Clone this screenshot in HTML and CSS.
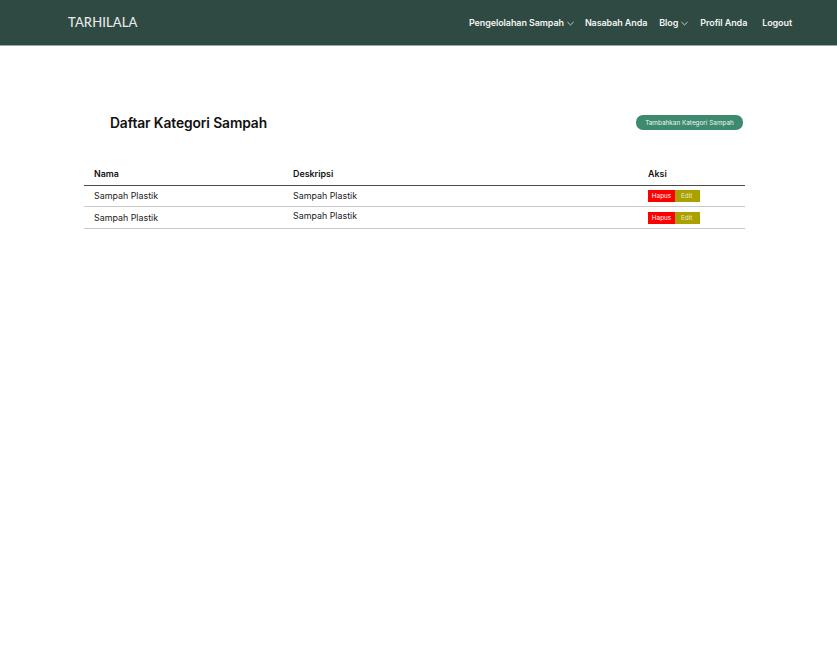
FILE: index.html
```html
<!DOCTYPE html>
<html lang="id">
<head>
<meta charset="utf-8">
<title>Daftar Kategori Sampah</title>
<link rel="stylesheet" href="styles.css">
</head>
<body>
<nav class="navbar">
  <div class="brand">TARHILALA</div>
  <ul class="menu">
    <li>Pengelolahan Sampah <svg class="chev" viewBox="0 0 8 5" width="7" height="5"><path d="M0.5 0.8 L4 4.2 L7.5 0.8" fill="none" stroke="currentColor" stroke-width="0.9"/></svg></li>
    <li>Nasabah Anda</li>
    <li>Blog <svg class="chev" viewBox="0 0 8 5" width="7" height="5"><path d="M0.5 0.8 L4 4.2 L7.5 0.8" fill="none" stroke="currentColor" stroke-width="0.9"/></svg></li>
    <li>Profil Anda</li>
    <li class="logout">Logout</li>
  </ul>
</nav>
<main class="content">
  <div class="page-head">
    <h1 class="title">Daftar Kategori Sampah</h1>
    <button class="btn-add">Tambahkan Kategori Sampah</button>
  </div>
  <table class="table">
    <thead>
      <tr><th class="c1">Nama</th><th class="c2">Deskripsi</th><th class="c3">Aksi</th></tr>
    </thead>
    <tbody>
      <tr><td>Sampah Plastik</td><td>Sampah Plastik</td><td><span class="btn-del">Hapus</span><span class="btn-edit">Edit</span></td></tr>
      <tr><td>Sampah Plastik</td><td class="up">Sampah Plastik</td><td><span class="btn-del">Hapus</span><span class="btn-edit">Edit</span></td></tr>
    </tbody>
  </table>
</main>
</body>
</html>
```
FILE: styles.css
```css
* { box-sizing: border-box; }
body {
  margin: 0;
  font-family: Inter, "Noto Sans", sans-serif;
  background: #fff;
  color: #111;
}
.navbar {
  height: 46px;
  background: #2f4a43;
  border-bottom: 1px solid #9aa8a3;
  display: flex;
  align-items: center;
  justify-content: space-between;
  padding: 0 45px 0 68px;
}
.brand {
  color: #e6e9e7;
  font-family: Lato, Inter, sans-serif;
  font-size: 13px;
  font-weight: 500;
  letter-spacing: 0.1px;
  padding-bottom: 1px;
}
.menu {
  list-style: none;
  margin: 0;
  padding: 0 0 1px 0;
  display: flex;
  align-items: center;
  gap: 12px;
  color: #f2f4f3;
  font-size: 9px;
  font-weight: 600;
  letter-spacing: -0.1px;
}
.menu li { display: flex; align-items: center; gap: 3px; }
.menu li:first-child { margin-right: -1px; }
.menu .logout { margin-left: 3px; }
.chev { margin-top: 2px; }
.content {
  padding: 0 92px 0 84px;
}
.page-head {
  display: flex;
  justify-content: space-between;
  align-items: center;
  padding: 68px 2px 0 26px;
  height: 86px;
}
.title {
  margin: 0;
  font-size: 13.8px;
  font-weight: 600;
  letter-spacing: -0.1px;
}
.btn-add {
  border: none;
  background: #3d8a6f;
  color: #eef5f2;
  font-family: Inter, sans-serif;
  font-size: 6.4px;
  height: 15px;
  width: 107px;
  padding: 0;
  border-radius: 7px;
  margin-top: -1px;
}
.table {
  width: 661px;
  border-collapse: collapse;
  margin-top: 32px;
  font-size: 8.9px;
}
.table th {
  text-align: left;
  font-weight: 600;
  height: 21px;
  padding: 0 0 2px 10px;
  border-bottom: 1px solid #4a4a4a;
  vertical-align: middle;
}
.table td {
  height: 21px;
  padding: 0 0 0 10px;
  border-bottom: 1px solid #c8c8c8;
  vertical-align: middle;
  color: #222;
}
.table tbody tr:last-child td { height: 22px; }
.table .c1 { width: 199px; }
.table .c2 { width: 355px; }
.table td.up { padding-bottom: 3px; }
.btn-del, .btn-edit {
  display: inline-block;
  height: 12px;
  line-height: 12px;
  font-size: 6.4px;
  color: #fff;
  vertical-align: middle;
  margin-top: 1px;
}
.btn-del { background: #ff0000; width: 27px; text-align: center; }
.btn-edit { background: #aaa100; width: 25px; padding-left: 6px; color: #eaeac0; }
```
